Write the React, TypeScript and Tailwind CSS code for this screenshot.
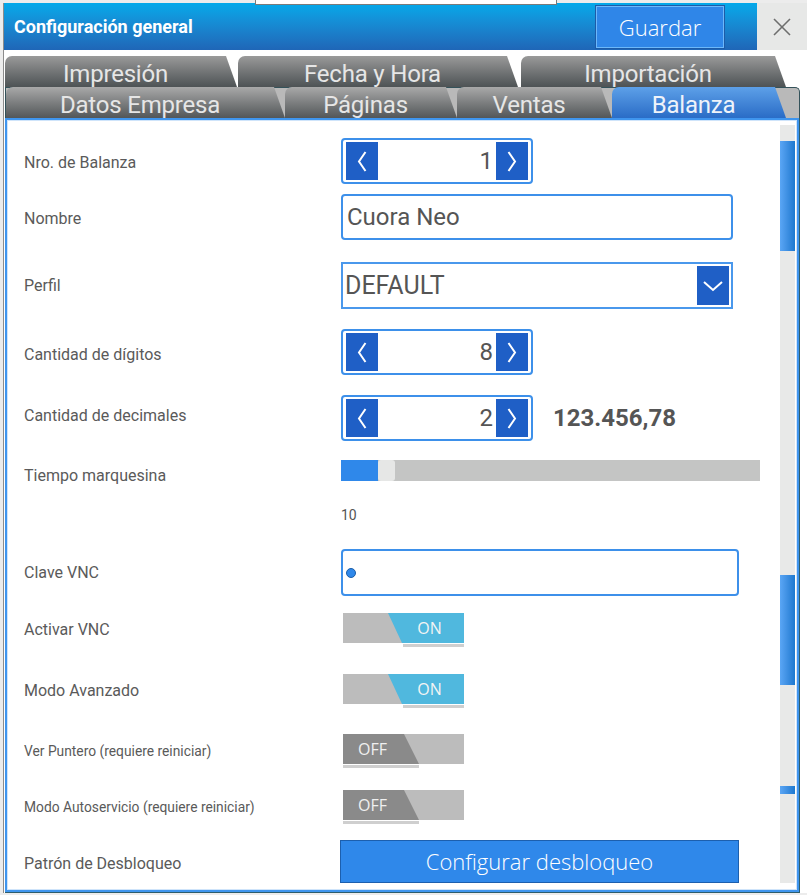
import React from 'react';

// Small white chevrons used inside the blue spinner / select buttons.
const Chevron = ({ dir }: { dir: 'left' | 'right' | 'down' }) => {
  if (dir === 'down') {
    return (
      <svg width="20" height="12" viewBox="0 0 20 12" fill="none" stroke="#fff" strokeWidth="2">
        <polyline points="1,2 10,10 19,2" />
      </svg>
    );
  }
  return (
    <svg width="10" height="21" viewBox="0 0 10 21" fill="none" stroke="#fff" strokeWidth="2">
      {dir === 'left' ? <polyline points="8.5,1 2,10.5 8.5,20" /> : <polyline points="1.5,1 8,10.5 1.5,20" />}
    </svg>
  );
};

const Spinner = ({ value }: { value: string }) => (
  <div className="flex h-[46px] w-[192px] items-center rounded-[4px] border-2 border-[#3d90ea] bg-white px-[3px]">
    <div className="flex h-[38px] w-[32px] items-center justify-center bg-[#1f5fc6]">
      <Chevron dir="left" />
    </div>
    <span className="flex-1 pr-[3px] text-right text-[24px] leading-none text-[#555]">{value}</span>
    <div className="flex h-[38px] w-[32px] items-center justify-center bg-[#1f5fc6]">
      <Chevron dir="right" />
    </div>
  </div>
);

// Sliding ON/OFF switch with the slanted split and the grey underline.
const Toggle = ({ on }: { on: boolean }) => (
  <div className="ml-[2px] w-[121px] font-['Open_Sans',sans-serif]">
    <div className="h-[30px] bg-[#bcbcbc]">
      {on ? (
        <div className="flex h-full items-center justify-center bg-[#50b8de] pl-[52px] text-[16px] text-[#f4f4f4] [clip-path:polygon(45px_0,100%_0,100%_100%,59px_100%)]">
          ON
        </div>
      ) : (
        <div className="flex h-full items-center bg-[#8a8a8a] pl-[15px] text-[16px] text-[#f0f0f0] [clip-path:polygon(0_0,61px_0,76px_100%,0_100%)]">
          OFF
        </div>
      )}
    </div>
    {on ? (
      <div className="ml-[60px] mt-px h-[3px] bg-[#cfcfcf]" />
    ) : (
      <div className="mt-px h-[3px] w-[76px] bg-[#cfcfcf]" />
    )}
  </div>
);

const Row = ({
  label,
  small,
  labelClass = '',
  className = '',
  children,
}: {
  label: string;
  small?: boolean;
  labelClass?: string;
  className?: string;
  children: React.ReactNode;
}) => (
  <div className={`flex items-center ${className}`}>
    <div
      className={`w-[333px] shrink-0 pl-[16px] text-[#5a5a5a] ${small ? 'text-[13.8px]' : 'text-[16px]'} ${labelClass}`}
    >
      {label}
    </div>
    {children}
  </div>
);

export default function App() {
  const backTabs = [
    { label: 'Impresión', w: 'w-[232px]', gap: '' },
    { label: 'Fecha y Hora', w: 'w-[280px]', gap: 'ml-px' },
    { label: 'Importación', w: 'w-[265px]', gap: 'ml-[3px]' },
  ];
  const frontTabs = [
    { label: 'Datos Empresa', w: 'w-[279px]', active: false },
    { label: 'Páginas', w: 'w-[172px]', active: false },
    { label: 'Ventas', w: 'w-[155px]', active: false },
    { label: 'Balanza', w: 'w-[174px]', active: true },
  ];

  return (
    <div className="h-[895px] w-[807px] overflow-hidden bg-[#ececec] font-['Roboto',sans-serif]">
      {/* top strip with the pull-down handle */}
      <div className="flex h-[3px] pl-[255px]">
        <div className="relative z-10 h-[5px] w-[302px] border-x border-b border-[#7a7a7a] bg-white" />
      </div>

      <div className="ml-[3px] border-l border-[#8c8c8c] bg-white">
        {/* title bar */}
        <div className="flex h-[47px]">
          <div className="flex flex-1 items-center bg-gradient-to-b from-[#02a9ea] to-[#1f66b7] pl-[10px] pr-[33px]">
            <h1 className="text-[18px] font-bold text-white">Configuración general</h1>
            <button className="ml-auto mt-[1px] h-[42px] w-[128px] border border-[#6cb8fa] bg-[#2f86e8] font-['Open_Sans',sans-serif] text-[22px] font-light text-white shadow-[0_0_0_1px_#1d5ba8]">
              Guardar
            </button>
          </div>
          <div className="flex w-[50px] items-center justify-center bg-[#e7e8e7]">
            <svg width="18" height="18" viewBox="0 0 18 18" stroke="#6e6e6e" strokeWidth="1.6">
              <line x1="1" y1="1" x2="17" y2="17" />
              <line x1="17" y1="1" x2="1" y2="17" />
            </svg>
          </div>
        </div>

        {/* tab rows */}
        <div className="pl-px pt-[6px]">
          <div className="flex h-[31px]">
            {backTabs.map((t) => (
              <div
                key={t.label}
                className={`${t.w} ${t.gap} flex h-full items-center justify-center rounded-tl-[7px] bg-gradient-to-b from-[#9a9a9a] to-[#4e5355] pr-[11px] pt-[4px] text-[24px] leading-none tracking-[-0.2px] text-[#e6e6e6] [clip-path:polygon(0_0,calc(100%_-_11px)_0,100%_100%,0_100%)]`}
              >
                {t.label}
              </div>
            ))}
          </div>
          <div className="mr-[7px] flex h-[31px] rounded-tr-[5px] border-x border-t border-[#34525a] bg-[#b9b9b9]">
            {frontTabs.map((t) => (
              <div
                key={t.label}
                className={`${t.w} -mt-px flex h-[31px] items-center justify-center rounded-tl-[7px] pr-[11px] pt-[4px] text-[24px] leading-none tracking-[-0.2px] [clip-path:polygon(0_0,calc(100%_-_11px)_0,100%_100%,0_100%)] ${
                  t.active
                    ? 'bg-gradient-to-b from-[#5da0e8] to-[#2a6cc6] text-[#eef3fa]'
                    : 'bg-gradient-to-b from-[#a9a9a9] to-[#535759] text-[#e6e6e6]'
                }`}
              >
                {t.label}
              </div>
            ))}
          </div>
        </div>

        {/* content panel */}
        <div className="ml-px mr-[7px] h-[775px] border-b border-r border-[#2e5d6c]">
          <div className="h-full border-2 border-[#3f95ee]">
            <div className="flex h-full border border-[#cfe4fa] bg-white">
              <div className="flex-1">
                <Row label="Nro. de Balanza" labelClass="translate-y-[2px]" className="mt-[17px]">
                  <Spinner value="1" />
                </Row>
                <Row label="Nombre" labelClass="translate-y-[2px]" className="mt-[10px]">
                  <div className="flex h-[46px] w-[392px] items-center rounded-[4px] border-2 border-[#3d90ea] pl-[4px] text-[24px] text-[#555]">
                    Cuora Neo
                  </div>
                </Row>
                <Row label="Perfil" className="mt-[22px]">
                  <div className="flex h-[47px] w-[392px] items-center border-2 border-[#4a98ec] pl-[2px] pr-[2px] text-[25px] text-[#555]">
                    <span className="flex-1">DEFAULT</span>
                    <div className="flex h-[39px] w-[32px] items-center justify-center bg-[#1f5fc6]">
                      <Chevron dir="down" />
                    </div>
                  </div>
                </Row>
                <Row label="Cantidad de dígitos" labelClass="translate-y-[3px]" className="mt-[20px]">
                  <Spinner value="8" />
                </Row>
                <Row label="Cantidad de decimales" labelClass="-translate-y-[2px]" className="mt-[20px]">
                  <Spinner value="2" />
                  <span className="ml-[20px] text-[24px] font-bold text-[#555]">123.456,78</span>
                </Row>
                <Row label="Tiempo marquesina" labelClass="translate-y-[5px]" className="mt-[19px] h-[21px]">
                  <div className="flex h-[21px] w-[419px] bg-[#c4c5c4]">
                    <div className="h-full w-[37px] bg-[#2f88ea]" />
                    <div className="h-full w-[17px] rounded-[3px] bg-[#e6e7e6]" />
                  </div>
                </Row>
                <div className="ml-[333px] mt-[26px] text-[14px] leading-[17px] text-[#555]">10</div>
                <Row label="Clave VNC" className="mt-[25px]">
                  <div className="flex h-[47px] w-[398px] items-center rounded-[4px] border-2 border-[#3d90ea] pl-[3px]">
                    <div className="h-[10px] w-[10px] rounded-full border border-[#1b5ea8] bg-[#2f88ea]" />
                  </div>
                </Row>
                <Row label="Activar VNC" className="mt-[17px]">
                  <Toggle on />
                </Row>
                <Row label="Modo Avanzado" className="mt-[27px]">
                  <Toggle on />
                </Row>
                <Row label="Ver Puntero (requiere reiniciar)" small className="mt-[26px]">
                  <Toggle on={false} />
                </Row>
                <Row label="Modo Autoservicio (requiere reiniciar)" small className="mt-[22px]">
                  <Toggle on={false} />
                </Row>
                <Row label="Patrón de Desbloqueo" labelClass="translate-y-[2px]" className="mt-[16px]">
                  <button className="-ml-px h-[43px] w-[399px] border border-[#1c5fae] bg-[#2f88ea] font-['Open_Sans',sans-serif] text-[22px] font-light text-white">
                    Configurar desbloqueo
                  </button>
                </Row>
              </div>

              {/* scrollbar */}
              <div className="mb-[6px] mr-px mt-[4px] w-[15px] bg-[#e8e9e8]">
                <div className="mt-[16px] h-[110px] bg-gradient-to-r from-[#5aa6f5] to-[#1a78cf]" />
                <div className="mt-[324px] h-[110px] bg-gradient-to-r from-[#5aa6f5] to-[#1a78cf]" />
                <div className="mt-[101px] h-[8px] bg-gradient-to-r from-[#5aa6f5] to-[#1a78cf]" />
              </div>
            </div>
          </div>
        </div>
      </div>
    </div>
  );
}
